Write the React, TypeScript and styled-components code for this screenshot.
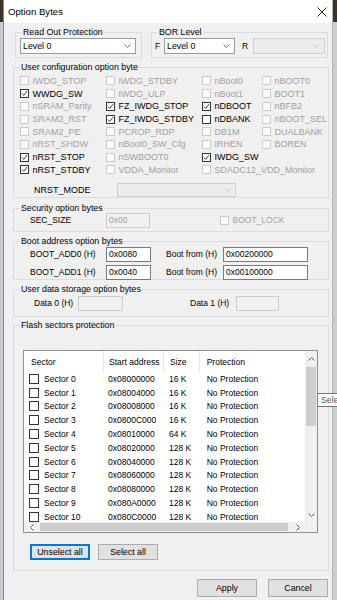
import React from 'react';
import styled, { createGlobalStyle } from 'styled-components';

const GlobalStyle = createGlobalStyle`
  html, body {
    margin: 0;
    padding: 0;
  }
  body {
    background: #2e2a26;
    font-family: "Liberation Sans", Arial, sans-serif;
    font-size: 8.5px;
    color: #000;
  }
`;

const Desktop = styled.div`
  position: relative;
  width: 337px;
  height: 600px;
  overflow: hidden;
  background: linear-gradient(#3b322a 0, #3b322a 22px, #c9ccd1 22px);
`;

const Window = styled.div`
  margin-left: 3px;
  width: 330px;
  height: 600px;
  box-sizing: border-box;
  border-left: 1px solid #4d94d9;
  border-right: 1px solid #b4b4b4;
  background: #f0f0f0;
  display: flex;
  flex-direction: column;
`;

const TitleBar = styled.div`
  height: 23px;
  flex: none;
  background: #fff;
  display: flex;
  align-items: center;
  justify-content: space-between;
  padding: 0 5px 0 4px;
`;

const Title = styled.span`
  font-size: 9.6px;
`;

const TopRow = styled.div`
  display: flex;
  gap: 9px;
  margin: 9px 0 0 11px;
`;

const Group = styled.div<{ $w: number; $h: number; $mt?: number; $ml?: number }>`
  position: relative;
  box-sizing: border-box;
  width: ${(p) => p.$w}px;
  height: ${(p) => p.$h}px;
  margin-top: ${(p) => p.$mt ?? 0}px;
  margin-left: ${(p) => p.$ml ?? 0}px;
  border: 1px solid #dcdcdc;
  flex: none;
`;

const Legend = styled.span`
  position: absolute;
  top: -6px;
  left: 6px;
  padding: 0 1px;
  background: #f0f0f0;
  line-height: 11px;
  font-size: 8.8px;
  white-space: nowrap;
`;

const InlineRow = styled.div<{ $pt?: number; $pl?: number }>`
  display: flex;
  align-items: center;
  padding-top: ${(p) => p.$pt ?? 0}px;
  padding-left: ${(p) => p.$pl ?? 0}px;
`;

const CenterRow = styled.div<{ $pl: number }>`
  display: flex;
  align-items: center;
  height: 100%;
  padding-left: ${(p) => p.$pl}px;
`;

const SideLabel = styled.span<{ $w: number; $ml?: number; $pl?: number; $disabled?: boolean }>`
  flex: none;
  box-sizing: border-box;
  width: ${(p) => p.$w}px;
  margin-left: ${(p) => p.$ml ?? 0}px;
  padding-left: ${(p) => p.$pl ?? 0}px;
  white-space: nowrap;
  color: ${(p) => (p.$disabled ? '#a0a0a0' : '#000')};
`;

const ComboBox = styled.div<{ $w: number; $h?: number; $disabled?: boolean }>`
  flex: none;
  box-sizing: border-box;
  width: ${(p) => p.$w}px;
  height: ${(p) => p.$h ?? 16}px;
  display: flex;
  align-items: center;
  padding-left: 2px;
  font-size: 8.8px;
  border: 1px solid ${(p) => (p.$disabled ? '#cfcfcf' : '#9a9a9a')};
  background: ${(p) => (p.$disabled ? '#ececec' : '#fff')};
`;

const ComboArrow = styled.svg`
  margin-left: auto;
  margin-right: 4px;
`;

const TextBox = styled.div<{ $w: number; $h?: number; $disabled?: boolean }>`
  flex: none;
  box-sizing: border-box;
  width: ${(p) => p.$w}px;
  height: ${(p) => p.$h ?? 15}px;
  display: flex;
  align-items: center;
  padding-left: 2px;
  border: 1px solid ${(p) => (p.$disabled ? '#cccccc' : '#7a7a7a')};
  background: ${(p) => (p.$disabled ? '#f0f0f0' : '#fff')};
  color: ${(p) => (p.$disabled ? '#a0a0a0' : '#000')};
`;

const CheckGrid = styled.div`
  display: grid;
  grid-template-columns: 86px 96px 60px 1fr;
  grid-auto-rows: 12.7px;
  padding: 6.65px 0 0 6px;
  font-size: 9px;
`;

const CheckItem = styled.label<{ $disabled?: boolean; $span?: number }>`
  display: flex;
  align-items: center;
  gap: 3.5px;
  white-space: nowrap;
  color: ${(p) => (p.$disabled ? '#a0a0a0' : '#000')};
  grid-column: span ${(p) => p.$span ?? 1};
`;

const Box = styled.span<{ $size: number; $disabled?: boolean }>`
  flex: none;
  box-sizing: border-box;
  width: ${(p) => p.$size}px;
  height: ${(p) => p.$size}px;
  display: flex;
  align-items: center;
  justify-content: center;
  border: 1px solid ${(p) => (p.$disabled ? '#cccccc' : '#333')};
  background: ${(p) => (p.$disabled ? '#fbfbfb' : '#fff')};
`;

const NrstRow = styled.div`
  display: flex;
  align-items: center;
  height: 14px;
  margin-top: 6.75px;
  padding-left: 20px;
  font-size: 9px;
`;

const BootGrid = styled.div`
  display: grid;
  grid-template-columns: 76px 45px 72px 85px;
  grid-auto-rows: 15px;
  row-gap: 3px;
  align-items: center;
  padding: 4.5px 0 0 16px;
`;

const ListBox = styled.div`
  width: 295px;
  height: 183px;
  box-sizing: border-box;
  border: 1px solid #8f8f8f;
  background: #fff;
  display: grid;
  grid-template-columns: 1fr 12px;
  grid-template-rows: 1fr 10px;
`;

const ListContent = styled.div`
  overflow: hidden;
  min-height: 0;
`;

const Columns = styled.div<{ $h: number }>`
  display: grid;
  grid-template-columns: 80px 60px 36px 1fr;
  height: ${(p) => p.$h}px;
  align-items: center;
`;

const HeadCell = styled.div<{ $pl: number; $sep?: boolean }>`
  height: 100%;
  display: flex;
  align-items: center;
  padding-left: ${(p) => p.$pl}px;
  border-right: ${(p) => (p.$sep ? '1px solid #e5e5e5' : 'none')};
  white-space: nowrap;
  overflow: hidden;
`;

const Cell = styled.div<{ $pl: number }>`
  display: flex;
  align-items: center;
  gap: 5px;
  padding-left: ${(p) => p.$pl}px;
  white-space: nowrap;
`;

const VScroll = styled.div`
  background: #f0f0f0;
  display: flex;
  flex-direction: column;
  align-items: center;
`;

const HScroll = styled.div`
  background: #f0f0f0;
  display: flex;
  align-items: center;
`;

const ScrollArrow = styled.div<{ $w: number; $h: number }>`
  flex: none;
  width: ${(p) => p.$w}px;
  height: ${(p) => p.$h}px;
  display: flex;
  align-items: center;
  justify-content: center;
`;

const VThumb = styled.div`
  width: 10px;
  height: 59px;
  margin-top: 1px;
  background: #cdcdcd;
`;

const HThumb = styled.div`
  flex: 1;
  height: 8px;
  margin: 0 2px 0 1px;
  background: #cdcdcd;
`;

const Spacer = styled.div`
  flex: 1;
`;

const Corner = styled.div`
  background: #f0f0f0;
`;

const ButtonRow = styled.div<{ $mt: number; $pl?: number; $pr?: number; $end?: boolean; $gap: number }>`
  display: flex;
  justify-content: ${(p) => (p.$end ? 'flex-end' : 'flex-start')};
  gap: ${(p) => p.$gap}px;
  margin-top: ${(p) => p.$mt}px;
  padding-left: ${(p) => p.$pl ?? 0}px;
  padding-right: ${(p) => p.$pr ?? 0}px;
`;

const Button = styled.button<{ $h: number; $focused?: boolean }>`
  box-sizing: border-box;
  width: 60px;
  height: ${(p) => p.$h}px;
  padding: 0;
  font-family: inherit;
  font-size: 8.8px;
  color: #000;
  background: #e1e1e1;
  border: 1px solid ${(p) => (p.$focused ? '#0078d7' : '#adadad')};
  box-shadow: ${(p) => (p.$focused ? 'inset 0 0 0 1px #0078d7' : 'none')};
  border-radius: 0;
`;

const Tooltip = styled.div`
  position: absolute;
  left: 317px;
  top: 393px;
  height: 14px;
  box-sizing: border-box;
  padding: 0 3px;
  line-height: 12px;
  font-size: 8.8px;
  white-space: nowrap;
  background: #fff;
  border: 1px solid #767676;
  color: #575757;
`;

const Chevron = ({ dir, color }: { dir: 'up' | 'down' | 'left' | 'right'; color: string }) => {
  const d = {
    down: 'M0.5 0.5 L3.5 3.5 L6.5 0.5',
    up: 'M0.5 3.5 L3.5 0.5 L6.5 3.5',
    left: 'M3.5 0.5 L0.5 3.5 L3.5 6.5',
    right: 'M0.5 0.5 L3.5 3.5 L0.5 6.5',
  }[dir];
  const horiz = dir === 'left' || dir === 'right';
  return (
    <svg width={horiz ? 4 : 7} height={horiz ? 7 : 4} viewBox={horiz ? '0 0 4 7' : '0 0 7 4'}>
      <path d={d} fill="none" stroke={color} strokeWidth="1" />
    </svg>
  );
};

const Check = ({ size, checked, disabled }: { size: number; checked?: boolean; disabled?: boolean }) => (
  <Box $size={size} $disabled={disabled}>
    {checked && (
      <svg width={size - 2} height={size - 2} viewBox="0 0 8 8">
        <path d="M1 4 L3 6.2 L7 1.2" fill="none" stroke="#222" strokeWidth="1" />
      </svg>
    )}
  </Box>
);

const Combo = ({ w, h, disabled, value }: { w: number; h?: number; disabled?: boolean; value?: string }) => (
  <ComboBox $w={w} $h={h} $disabled={disabled}>
    {value}
    <ComboArrow width="7" height="4" viewBox="0 0 7 4">
      <path d="M0.5 0.5 L3.5 3.5 L6.5 0.5" fill="none" stroke={disabled ? '#c4c4c4' : '#707070'} />
    </ComboArrow>
  </ComboBox>
);

type Opt = { label: string; checked?: boolean; disabled?: boolean; span?: number } | null;

const options: Opt[] = [
  { label: 'IWDG_STOP', disabled: true },
  { label: 'IWDG_STDBY', disabled: true },
  { label: 'nBoot0', disabled: true },
  { label: 'nBOOT0', disabled: true },
  { label: 'WWDG_SW', checked: true },
  { label: 'IWDG_ULP', disabled: true },
  { label: 'nBoot1', disabled: true },
  { label: 'BOOT1', disabled: true },
  { label: 'nSRAM_Parity', disabled: true },
  { label: 'FZ_IWDG_STOP', checked: true },
  { label: 'nDBOOT', checked: true },
  { label: 'nBFB2', disabled: true },
  { label: 'SRAM2_RST', disabled: true },
  { label: 'FZ_IWDG_STDBY', checked: true },
  { label: 'nDBANK' },
  { label: 'nBOOT_SEL', disabled: true },
  { label: 'SRAM2_PE', disabled: true },
  { label: 'PCROP_RDP', disabled: true },
  { label: 'DB1M', disabled: true },
  { label: 'DUALBANK', disabled: true },
  { label: 'nRST_SHDW', disabled: true },
  { label: 'nBoot0_SW_Cfg', disabled: true },
  { label: 'IRHEN', disabled: true },
  { label: 'BOREN', disabled: true },
  { label: 'nRST_STOP', checked: true },
  { label: 'nSWBOOT0', disabled: true },
  { label: 'IWDG_SW', checked: true },
  null,
  { label: 'nRST_STDBY', checked: true },
  { label: 'VDDA_Monitor', disabled: true },
  { label: 'SDADC12_VDD_Monitor', disabled: true, span: 2 },
];

const sectors: [string, string, string][] = [
  ['Sector 0', '0x08000000', '16 K'],
  ['Sector 1', '0x08004000', '16 K'],
  ['Sector 2', '0x08008000', '16 K'],
  ['Sector 3', '0x0800C000', '16 K'],
  ['Sector 4', '0x08010000', '64 K'],
  ['Sector 5', '0x08020000', '128 K'],
  ['Sector 6', '0x08040000', '128 K'],
  ['Sector 7', '0x08060000', '128 K'],
  ['Sector 8', '0x08080000', '128 K'],
  ['Sector 9', '0x080A0000', '128 K'],
  ['Sector 10', '0x080C0000', '128 K'],
];

export default function App() {
  return (
    <>
      <GlobalStyle />
      <Desktop>
        <Window>
          <TitleBar>
            <Title>Option Bytes</Title>
            <svg width="10" height="10" viewBox="0 0 10 10">
              <path d="M0.5 0.5 L9.5 9.5 M9.5 0.5 L0.5 9.5" stroke="#111" strokeWidth="0.9" />
            </svg>
          </TitleBar>

          <TopRow>
            <Group $w={127} $h={26}>
              <Legend>Read Out Protection</Legend>
              <InlineRow $pt={5} $pl={4}>
                <Combo w={116} value="Level 0" />
              </InlineRow>
            </Group>
            <Group $w={177} $h={26}>
              <Legend>BOR Level</Legend>
              <InlineRow $pt={5} $pl={3}>
                <SideLabel $w={9}>F</SideLabel>
                <Combo w={71} value="Level 0" />
                <SideLabel $w={11} $ml={7}>R</SideLabel>
                <Combo w={72} disabled />
              </InlineRow>
            </Group>
          </TopRow>

          <Group $w={316} $h={131} $mt={9} $ml={9}>
            <Legend>User configuration option byte</Legend>
            <CheckGrid>
              {options.map((o, i) =>
                o ? (
                  <CheckItem key={i} $disabled={o.disabled} $span={o.span}>
                    <Check size={9} checked={o.checked} disabled={o.disabled} />
                    {o.label}
                  </CheckItem>
                ) : (
                  <span key={i} />
                ),
              )}
            </CheckGrid>
            <NrstRow>
              <SideLabel $w={83}>NRST_MODE</SideLabel>
              <Combo w={119} h={14} disabled />
            </NrstRow>
          </Group>

          <Group $w={316} $h={24} $mt={10} $ml={9}>
            <Legend>Security option bytes</Legend>
            <CenterRow $pl={16}>
              <SideLabel $w={76}>SEC_SIZE</SideLabel>
              <TextBox $w={44} $disabled>0x00</TextBox>
              <SideLabel $w={120} $ml={70} $disabled>
                <CheckItem $disabled>
                  <Check size={9} disabled />
                  BOOT_LOCK
                </CheckItem>
              </SideLabel>
            </CenterRow>
          </Group>

          <Group $w={316} $h={39} $mt={9} $ml={9}>
            <Legend>Boot address option bytes</Legend>
            <BootGrid>
              <SideLabel $w={76}>BOOT_ADD0 (H)</SideLabel>
              <TextBox $w={45}>0x0080</TextBox>
              <SideLabel $w={72} $pl={15}>Boot from (H)</SideLabel>
              <TextBox $w={85}>0x00200000</TextBox>
              <SideLabel $w={76}>BOOT_ADD1 (H)</SideLabel>
              <TextBox $w={45}>0x0040</TextBox>
              <SideLabel $w={72} $pl={15}>Boot from (H)</SideLabel>
              <TextBox $w={85}>0x00100000</TextBox>
            </BootGrid>
          </Group>

          <Group $w={316} $h={28} $mt={9} $ml={9}>
            <Legend>User data storage option bytes</Legend>
            <CenterRow $pl={20}>
              <SideLabel $w={44}>Data 0 (H)</SideLabel>
              <TextBox $w={45} $disabled />
              <SideLabel $w={46} $ml={67}>Data 1 (H)</SideLabel>
              <TextBox $w={43} $disabled />
            </CenterRow>
          </Group>

          <Group $w={316} $h={246} $mt={8} $ml={9}>
            <Legend>Flash sectors protection</Legend>
            <InlineRow $pt={24} $pl={9}>
              <ListBox>
                <ListContent>
                  <Columns $h={21}>
                    <HeadCell $pl={7} $sep>Sector</HeadCell>
                    <HeadCell $pl={5} $sep>Start address</HeadCell>
                    <HeadCell $pl={6} $sep>Size</HeadCell>
                    <HeadCell $pl={6.7}>Protection</HeadCell>
                  </Columns>
                  {sectors.map(([name, addr, size]) => (
                    <Columns $h={13.8} key={name}>
                      <Cell $pl={5}>
                        <Check size={10} />
                        {name}
                      </Cell>
                      <Cell $pl={4}>{addr}</Cell>
                      <Cell $pl={5}>{size}</Cell>
                      <Cell $pl={6.7}>No Protection</Cell>
                    </Columns>
                  ))}
                </ListContent>
                <VScroll>
                  <ScrollArrow $w={12} $h={15}>
                    <Chevron dir="up" color="#606060" />
                  </ScrollArrow>
                  <VThumb />
                  <Spacer />
                  <ScrollArrow $w={12} $h={14}>
                    <Chevron dir="down" color="#606060" />
                  </ScrollArrow>
                </VScroll>
                <HScroll>
                  <ScrollArrow $w={15} $h={10}>
                    <Chevron dir="left" color="#606060" />
                  </ScrollArrow>
                  <HThumb />
                  <ScrollArrow $w={15} $h={10}>
                    <Chevron dir="right" color="#606060" />
                  </ScrollArrow>
                </HScroll>
                <Corner />
              </ListBox>
            </InlineRow>
            <ButtonRow $mt={11} $pl={16} $gap={8}>
              <Button $h={16} $focused>Unselect all</Button>
              <Button $h={16}>Select all</Button>
            </ButtonRow>
          </Group>

          <ButtonRow $mt={8} $pr={4} $gap={11} $end>
            <Button $h={18}>Apply</Button>
            <Button $h={18}>Cancel</Button>
          </ButtonRow>
        </Window>
        <Tooltip>Select all</Tooltip>
      </Desktop>
    </>
  );
}
